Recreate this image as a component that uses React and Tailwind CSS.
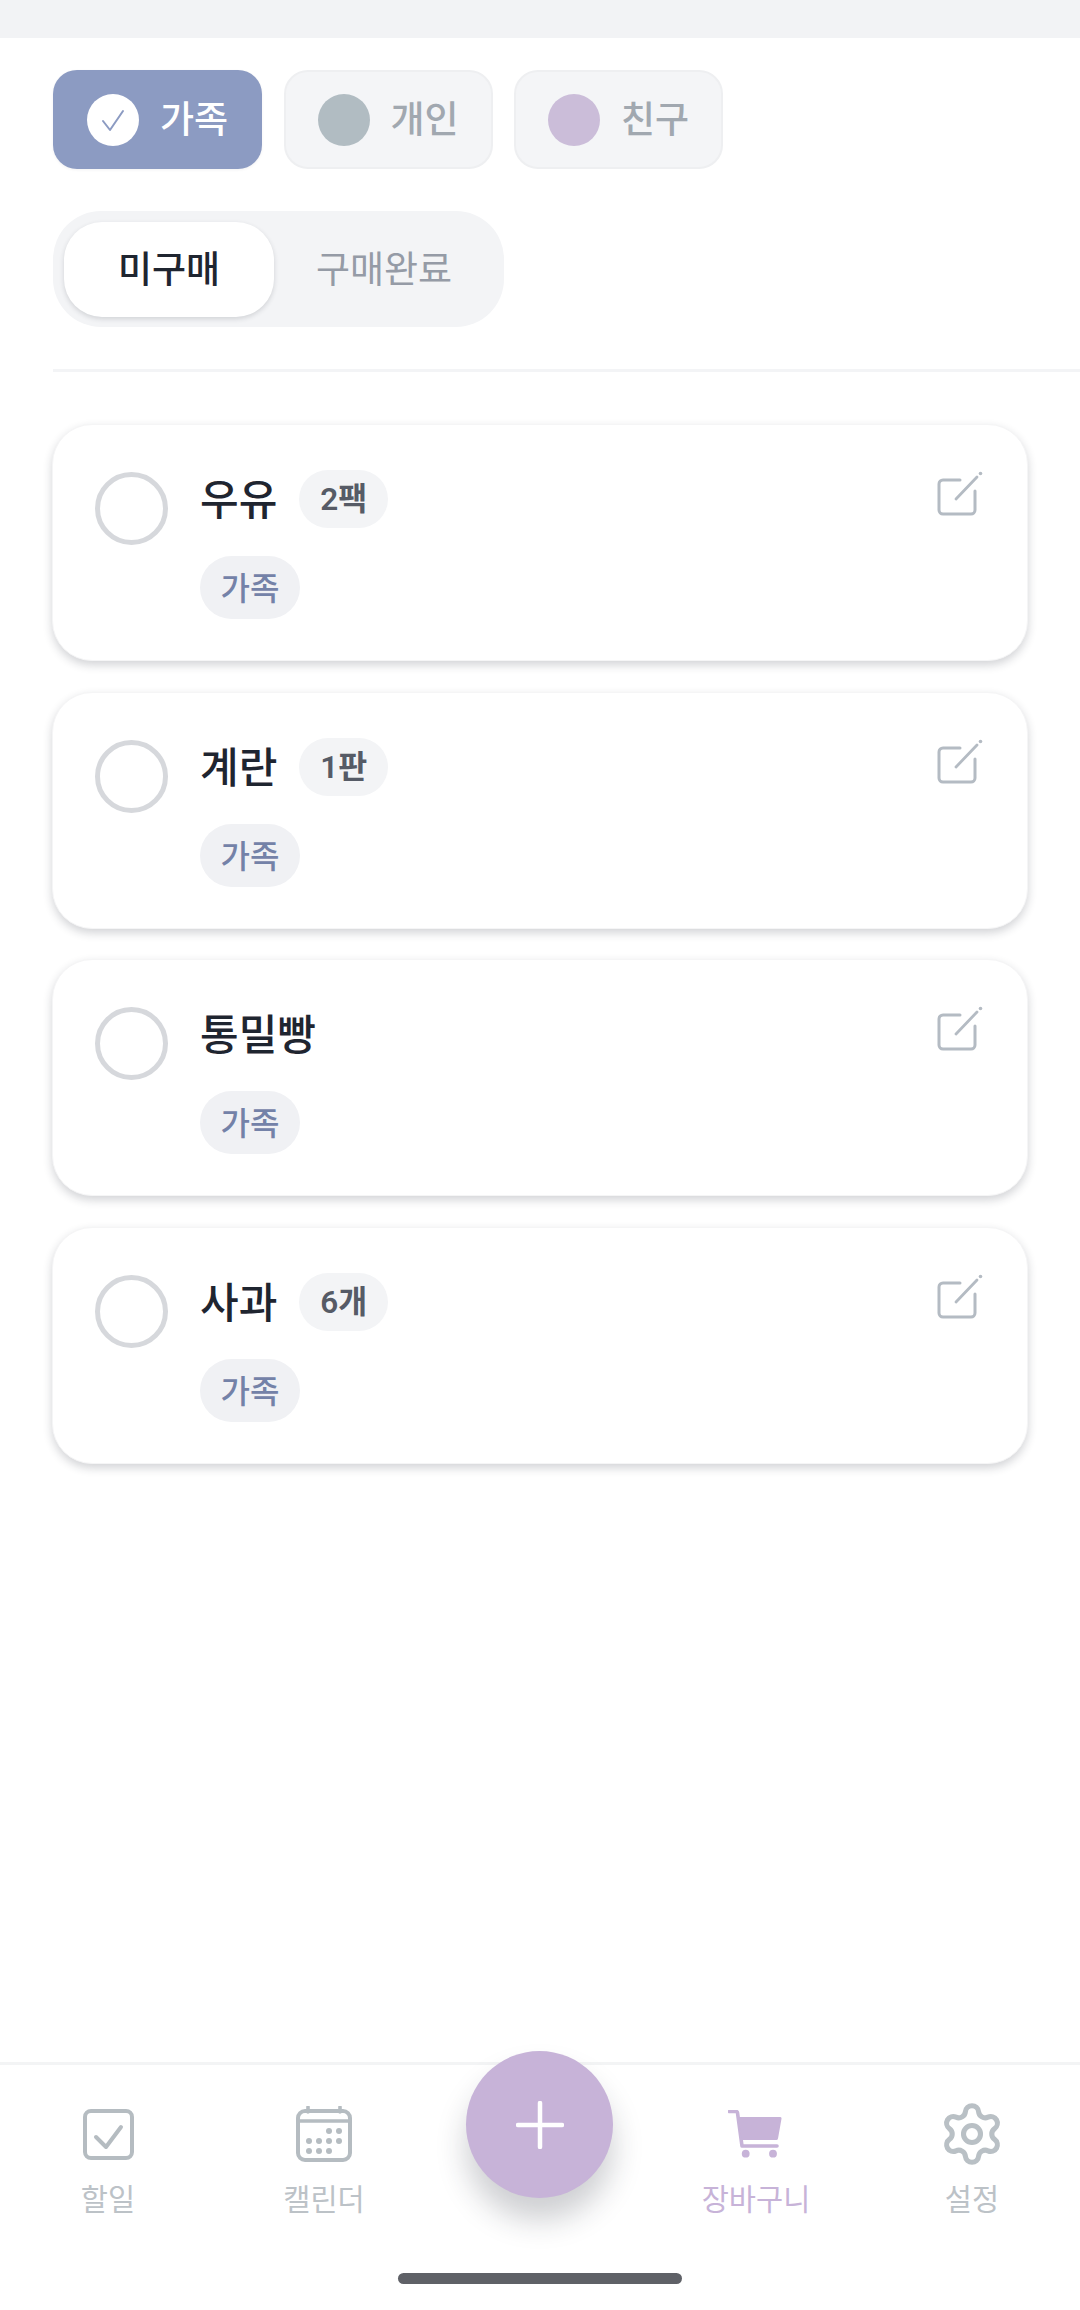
import React from 'react'
import { Settings } from 'lucide-react'

const items = [
  { name: '우유', qty: '2팩' },
  { name: '계란', qty: '1판' },
  { name: '통밀빵' },
  { name: '사과', qty: '6개' },
]

function EditIcon() {
  return (
    <svg width="46" height="46" viewBox="0 0 46 46" fill="none" stroke="#b4bbc3" strokeLinecap="round" strokeLinejoin="round">
      <path d="M23 9H6a4 4 0 0 0-4 4v26a4 4 0 0 0 4 4h28a4 4 0 0 0 4-4V20" strokeWidth="3" />
      <path d="M19 28L40 6" strokeWidth="2.800" />
      <circle cx="43.500" cy="2.500" r="1.800" fill="#b4bbc3" stroke="none" />
    </svg>
  )
}

function TodoIcon() {
  return (
    <svg width="51" height="51" viewBox="0 0 51 51" fill="none" stroke="#b5bcc1" strokeLinecap="round" strokeLinejoin="round">
      <rect x="2" y="2" width="47" height="47" rx="6" strokeWidth="4" />
      <path d="M13 28l10 10 15-20" strokeWidth="4" />
    </svg>
  )
}

function CalendarIcon() {
  const dots = [[33, 25], [43, 25], [13, 35], [23, 35], [33, 35], [43, 35], [13, 45], [23, 45], [33, 45]]
  return (
    <svg width="56" height="56" viewBox="0 0 56 56" fill="none" stroke="#b5bcc1" strokeLinecap="round">
      <rect x="2" y="5" width="52" height="49" rx="7" strokeWidth="4" />
      <path d="M2 15h52M12 1v5M44 1v5" strokeWidth="3.600" />
      {dots.map(([x, y]) => <circle key={`${x}-${y}`} cx={x} cy={y} r="3" fill="#b5bcc1" stroke="none" />)}
    </svg>
  )
}

function CartIcon() {
  return (
    <svg className="-ml-[3px]" width="54" height="49" viewBox="0 0 54 49" fill="none">
      <path d="M1.500 1.500H8a1.500 1.500 0 0 1 1.500 1.300L14 36h35" stroke="#c7b3d8" strokeWidth="3.600" strokeLinecap="round" strokeLinejoin="round" />
      <path d="M10.500 7H52a1.500 1.500 0 0 1 1.500 1.700L50 28.500a1.800 1.800 0 0 1-1.800 1.500H13.500z" fill="#c7b3d8" />
      <circle cx="17.700" cy="43.700" r="3.900" fill="#c7b3d8" />
      <circle cx="45" cy="43.700" r="3.900" fill="#c7b3d8" />
    </svg>
  )
}

function ItemCard({ name, qty }) {
  return (
    <div className="flex items-start h-[237px] rounded-[40px] bg-white pl-[42px] pr-[44px] pt-[46px] border border-[#f5f5f6] shadow-[0_4px_10px_rgba(30,35,50,0.2)]">
      <div className="w-[73px] h-[73px] mt-[1px] rounded-full border-[5px] border-[#d6d8dc] shrink-0" />
      <div className="flex-1 ml-[32px] -mt-[1px]">
        <div className="flex items-center h-[58px]">
          <span className="pt-[4px] text-[42px] font-medium leading-none text-[#1f2530]">{name}</span>
          {qty && (
            <span className="ml-[22px] flex items-center justify-center w-[89px] h-[58px] pt-[2px] rounded-full bg-[#f3f4f6] text-[31.500px] font-semibold text-[#565b66]">
              {qty}
            </span>
          )}
        </div>
        <span className="mt-[28px] flex items-center justify-center w-[100px] h-[63px] pt-[3px] rounded-full bg-[#f0f1f4] text-[32px] font-medium text-[#7482a8]">
          가족
        </span>
      </div>
      <div>
        <EditIcon />
      </div>
    </div>
  )
}

function NavItem({ icon, label, active }) {
  return (
    <div className="flex flex-col items-center">
      <div className="h-[60px] flex items-center justify-center">{icon}</div>
      <span className={`mt-[18px] text-[29.500px] leading-[36px] ${active ? 'text-[#c7b3d8]' : 'text-[#bcc2c7]'}`}>{label}</span>
    </div>
  )
}

export default function App() {
  return (
    <div
      className="relative flex flex-col w-[1080px] h-[2310px] bg-white overflow-hidden"
      style={{ fontFamily: 'Roboto, "Noto Sans CJK KR", sans-serif' }}
    >
      <div className="h-[38px] bg-[#f2f3f5]" />

      <div className="flex gap-[21.500px] pl-[53px] mt-[32px]">
        <div className="flex items-center w-[209px] h-[99px] rounded-[24px] bg-[#8c9bc2] pl-[34px] shadow-[0_1px_3px_rgba(30,35,50,0.06)]">
          <span className="flex items-center justify-center w-[52px] h-[52px] rounded-full bg-white">
            <svg width="28" height="28" viewBox="0 0 28 28" fill="none" stroke="#8c9bc2" strokeWidth="2" strokeLinecap="round" strokeLinejoin="round">
              <path d="M4 15l7 9L24 5" />
            </svg>
          </span>
          <span className="ml-[21px] pt-[3px] text-[37px] font-medium text-white">가족</span>
        </div>
        <div className="flex items-center w-[209px] h-[99px] rounded-[24px] bg-[#f4f5f7] border-2 border-[#eeeff1] pl-[32px]">
          <span className="w-[52px] h-[52px] rounded-full bg-[#b1bcc2]" />
          <span className="ml-[21px] pt-[3px] text-[37px] font-medium text-[#a1a8b0]">개인</span>
        </div>
        <div className="flex items-center w-[209px] h-[99px] rounded-[24px] bg-[#f4f5f7] border-2 border-[#eeeff1] pl-[32px]">
          <span className="w-[52px] h-[52px] rounded-full bg-[#cbbdd9]" />
          <span className="ml-[21px] pt-[3px] text-[37px] font-medium text-[#a1a8b0]">친구</span>
        </div>
      </div>

      <div className="flex items-center w-[451px] h-[116px] mt-[42px] ml-[53px] rounded-[48px] bg-[#f3f4f6] pl-[11px]">
        <div className="flex items-center justify-center w-[210px] h-[95px] pt-[4px] rounded-[38px] bg-white shadow-[0_2px_5px_rgba(30,35,50,0.16)] text-[37px] font-medium text-[#1f2530]">
          미구매
        </div>
        <div className="flex-1 flex items-center justify-center pt-[4px] text-[37px] text-[#959ba6] pr-[10px]">
          구매완료
        </div>
      </div>

      <div className="h-[3px] mt-[42px] ml-[53px] bg-[#f3f4f6]" />

      <div className="flex flex-col gap-[30.500px] mx-[52px] mt-[52px]">
        {items.map((item) => <ItemCard key={item.name} {...item} />)}
      </div>

      <div className="mt-auto h-[248px] border-t-[3px] border-[#f3f4f5] bg-white pt-[39px] grid grid-cols-5">
        <NavItem icon={<TodoIcon />} label="할일" />
        <NavItem icon={<CalendarIcon />} label="캘린더" />
        <div />
        <NavItem icon={<CartIcon />} label="장바구니" active />
        <NavItem icon={<Settings size={68} color="#b9c0c5" strokeWidth={1.800} />} label="설정" />
      </div>

      <div className="absolute left-[466px] top-[2051px] flex items-center justify-center w-[147px] h-[147px] rounded-full bg-[#c7b3d8] shadow-[0_22px_30px_rgba(30,35,50,0.22)]">
        <svg width="48" height="48" viewBox="0 0 48 48" stroke="#ffffff" strokeWidth="4.500" strokeLinecap="round">
          <path d="M24 2v44M2 24h44" />
        </svg>
      </div>

      <div className="absolute left-[398px] top-[2273px] w-[284px] h-[11px] rounded-full bg-[#5f6167]" />
    </div>
  )
}
